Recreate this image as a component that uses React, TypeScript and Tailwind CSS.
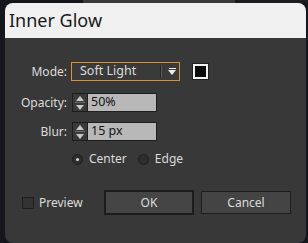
import React from "react";

const font = { fontFamily: '"Noto Sans", "Open Sans", Arial, sans-serif' };

function Spinner() {
  return (
    <div className="w-[16px] h-[19px] border border-[#1e1e1e] bg-[#3a3a3a] flex flex-col">
      <div className="flex-1 flex items-center justify-center">
        <svg width="8" height="5" viewBox="0 0 8 5"><path d="M0 5 L4 0 L8 5 Z" fill="#c8c8c8" /></svg>
      </div>
      <div className="h-px bg-[#6a6a6a] mx-[2px]" />
      <div className="flex-1 flex items-center justify-center">
        <svg width="8" height="5" viewBox="0 0 8 5"><path d="M0 0 L4 5 L8 0 Z" fill="#c8c8c8" /></svg>
      </div>
    </div>
  );
}

function NumField({ value }: { value: string }) {
  return (
    <div className="flex items-center h-[19px]">
      <Spinner />
      <div className="w-[69px] h-[19px] bg-[#b8b8b8] border border-[#1e1e1e] border-l-0 flex items-center pl-[3px] text-[12.5px] text-[#141414]">
        {value}
      </div>
    </div>
  );
}

export default function App() {
  return (
    <div className="w-[308px] h-[243px] bg-[#15151c] overflow-hidden flex flex-col" style={font}>
      <div className="h-[3px] flex shrink-0">
        <div className="w-[83px] bg-[#15151c]" />
        <div className="w-[152px] bg-[#3a3a3a]" />
        <div className="flex-1 bg-[#1c1c22]" />
      </div>
      <div className="ml-[5px] w-[301px] h-[240px] rounded-[8px] overflow-hidden flex flex-col bg-[#383838]">
        <div className="h-[35px] bg-[#f0f0f0] flex items-center pl-[4px] text-[18px] text-[#1a1a1a] shrink-0">
          Inner Glow
        </div>
        <div className="flex flex-col text-[12px] text-[#dcdcdc]">
          {/* Mode */}
          <div className="mt-[24px] h-[19px] flex items-center">
            <div className="w-[62px] text-right">Mode:</div>
            <div className="ml-[4px] w-[109px] h-[19px] border border-[#e0902e] bg-[#3a3a3a] flex items-center">
              <div className="flex-1 pl-[8px] leading-none text-[12.5px]">Soft Light</div>
              <div className="w-px h-[13px] bg-[#262626]" />
              <div className="w-px h-[13px] bg-[#5a5a5a] mr-[3px]" />
              <div className="w-[14px] flex flex-col items-center justify-center">
                <div className="w-[7px] h-px bg-[#eeeeee] mb-px" />
                <svg width="8" height="5" viewBox="0 0 8 5"><path d="M0 0 L8 0 L4 5 Z" fill="#eeeeee" /></svg>
              </div>
            </div>
            <div className="ml-[12px] w-[17px] h-[17px] border border-[#202020] bg-[#0a0a0a] flex">
              <div className="flex-1 border-2 border-[#f2f2f2] bg-[#0a0a0a]" />
            </div>
          </div>
          {/* Opacity */}
          <div className="mt-[12px] h-[19px] flex items-center">
            <div className="w-[62px] text-right">Opacity:</div>
            <div className="ml-[5px]"><NumField value="50%" /></div>
          </div>
          {/* Blur */}
          <div className="mt-[10px] h-[19px] flex items-center">
            <div className="w-[62px] text-right">Blur:</div>
            <div className="ml-[5px]"><NumField value="15 px" /></div>
          </div>
          {/* Radios */}
          <div className="mt-[11px] h-[14px] flex items-center pl-[67px]">
            <div className="w-[11px] h-[11px] rounded-full border border-[#1e1e1e] bg-[#2e2e2e] flex items-center justify-center">
              <div className="w-[3px] h-[3px] rounded-full bg-[#d8d8d8]" />
            </div>
            <div className="ml-[6px]">Center</div>
            <div className="ml-[11px] w-[11px] h-[11px] rounded-full border border-[#1e1e1e] bg-[#2e2e2e]" />
            <div className="ml-[6px]">Edge</div>
          </div>
          {/* Bottom */}
          <div className="mt-[24px] h-[25px] flex items-center">
            <div className="ml-[17px] w-[12px] h-[12px] border border-[#1e1e1e] bg-[#333333]" />
            <div className="ml-[5px] w-[65px]">Preview</div>
            <div className="w-[90px] h-[25px] border-2 border-[#1c1c1c] bg-[#454545] flex items-center justify-center">OK</div>
            <div className="ml-[7px] w-[90px] h-[23px] border border-[#1e1e1e] bg-[#444444] flex items-center justify-center">Cancel</div>
          </div>
        </div>
      </div>
    </div>
  );
}
